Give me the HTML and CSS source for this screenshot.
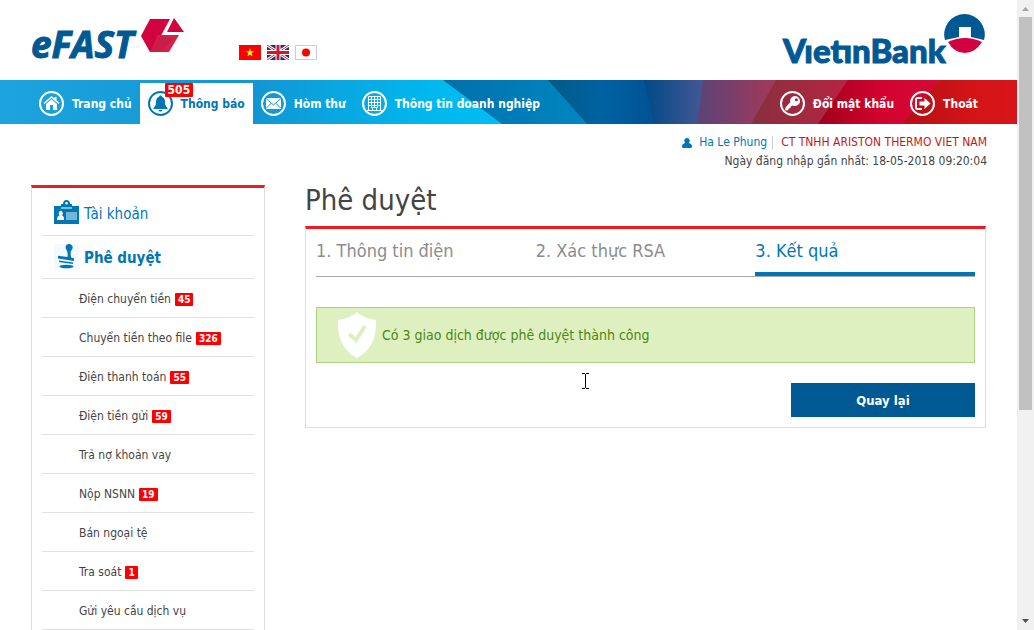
FILE: index.html
```html
<!DOCTYPE html>
<html lang="vi">
<head>
  <meta charset="UTF-8">
  <meta name="viewport" content="width=device-width, initial-scale=1.0">
  <title>VietinBank eFAST - Phê duyệt</title>
  <link rel="stylesheet" href="styles.css">
</head>
<body>
  <div class="page">
    <header class="header">
      <a href="#" class="logo-efast" aria-label="eFAST">
        <svg width="160" height="60" viewBox="-4 0 160 60">
          <text x="0" y="48" class="efast-text">eFAST</text>
          <path d="M119 9H139L126 33L119 42L110 26Z" fill="#d2013f"/>
          <path d="M127 25H148L138 42H119Z" fill="#d91f4b"/>
          <path d="M129 25L119 42H130L143 28Z" fill="#b91c49" opacity=".5"/>
          <path d="M143 8L153 22H136Z" fill="#d2013f"/>
        </svg>
      </a>
      <div class="languages">
        <a href="#" aria-label="Tiếng Việt">
          <svg width="22" height="15" viewBox="0 0 22 15"><path fill="#f00" d="M0 0h22v15H0z"/><path fill="#ff0" d="M11 3l1 3.200h3.200l-2.600 1.900 1 3.200L11 9.400l-2.600 1.900 1-3.200-2.600-1.900H10z"/></svg>
        </a>
        <a href="#" aria-label="English">
          <svg width="22" height="15" viewBox="0 0 22 15"><path fill="#20306f" d="M0 0h22v15H0z"/><path stroke="#fff" stroke-width="3" d="M0 0l22 15M22 0L0 15"/><path stroke="#d8203a" d="M0 0l22 15M22 0L0 15"/><path stroke="#fff" stroke-width="5" d="M11 0v15M0 7.500h22"/><path stroke="#d8152f" stroke-width="3" d="M11 0v15M0 7.500h22"/></svg>
        </a>
        <a href="#" aria-label="日本語">
          <svg width="22" height="15" viewBox="0 0 22 15"><path fill="#fff" stroke="#ccc" d="M.5.5h21v14H.5z"/><circle cx="11" cy="7.500" r="4" fill="#f00"/></svg>
        </a>
      </div>
      <a href="#" class="logo-bank" aria-label="VietinBank">
        <svg width="206" height="60" viewBox="0 0 206 60">
          <text x="3" y="53" class="bank-text">VıetınBank</text>
          <path d="M165 30A20.300 20.300 0 1 1 204 30L191 27V17H179V27Z" fill="#005993"/>
          <path d="M168 32Q185 24 202 32Q195 43 185 43Q174 43 168 32Z" fill="#d2013f"/>
        </svg>
      </a>
    </header>

    <nav class="navbar">
      <svg class="navbar-bg" viewBox="0 0 1017 44" preserveAspectRatio="none">
        <defs>
          <linearGradient id="g1"><stop offset="0" stop-color="#1da3de"/><stop offset=".5" stop-color="#1296d3"/><stop offset=".85" stop-color="#00b8ee"/><stop offset="1" stop-color="#00bdf2"/></linearGradient>
          <linearGradient id="g2"><stop offset="0" stop-color="#0070ac"/><stop offset="1" stop-color="#0087c2"/></linearGradient>
          <linearGradient id="g3"><stop offset="0" stop-color="#005b88"/><stop offset=".5" stop-color="#0062a2"/><stop offset="1" stop-color="#005293"/></linearGradient>
          <linearGradient id="g4"><stop offset="0" stop-color="#004a88"/><stop offset="1" stop-color="#465894"/></linearGradient>
          <linearGradient id="g5"><stop offset="0" stop-color="#5a4479"/><stop offset="1" stop-color="#a73758"/></linearGradient>
          <linearGradient id="g6"><stop offset="0" stop-color="#862f3d"/><stop offset="1" stop-color="#b92443"/></linearGradient>
          <linearGradient id="g7"><stop offset="0" stop-color="#9f001d"/><stop offset=".5" stop-color="#d2042f"/><stop offset="1" stop-color="#d60935"/></linearGradient>
          <linearGradient id="g8"><stop offset="0" stop-color="#b41013"/><stop offset=".6" stop-color="#d31417"/><stop offset="1" stop-color="#d81418"/></linearGradient>
        </defs>
        <path fill="url(#g1)" d="M0 0H504V44H0z"/>
        <path fill="url(#g2)" d="M443 0H590V44H502z"/>
        <path fill="url(#g3)" d="M548 0H656V44H587z"/>
        <path fill="url(#g4)" d="M644 0H705V44H654z"/>
        <path fill="url(#g5)" d="M703 0H778V44H697z"/>
        <path fill="url(#g6)" d="M776 0H850V44H751z"/>
        <path fill="url(#g7)" d="M848 0H942V44H818z"/>
        <path fill="url(#g8)" d="M940 0H1017V44H902z"/>
      </svg>
      <a href="#" class="nav-item">
        <svg class="nav-icon" viewBox="0 0 25 25"><circle cx="12.500" cy="12.500" r="11.500"/><path class="solid" d="M12.500 5L4.500 12l1 1 7-6 7 6 1-1-3-2.700V6h-2v1.600z"/><path class="solid" d="M7 13l5.500-4.700L18 13v6h-4v-5h-3v5H7z"/></svg>
        Trang chủ
      </a>
      <a href="#" class="nav-item active">
        <svg class="nav-icon" viewBox="0 0 25 25"><circle cx="12.500" cy="12.500" r="11.500"/><path class="solid" d="M12.500 4.500c-1 0-1.400.6-1.400 1.300C8.700 6.500 8 8.500 8 11c0 3-.8 4.500-2.500 6v1h14v-1C17.800 15.500 17 14 17 11c0-2.500-.7-4.500-3.100-5.200 0-.7-.4-1.300-1.400-1.300zM10.500 19c.3 1 1 1.600 2 1.600s1.700-.6 2-1.600z"/></svg>
        Thông báo
        <span class="nav-count">505</span>
      </a>
      <a href="#" class="nav-item">
        <svg class="nav-icon" viewBox="0 0 25 25"><circle cx="12.500" cy="12.500" r="11.500"/><path class="solid" d="M5 7h15v11H5z"/><path class="cut" d="M5 7.500l7.500 6.500L20 7.500M5 17.500l5.200-5.300M20 17.500l-5.200-5.300"/></svg>
        Hòm thư
      </a>
      <a href="#" class="nav-item">
        <svg class="nav-icon" viewBox="0 0 25 25"><circle cx="12.500" cy="12.500" r="11.500"/><path class="thin" d="M6.500 5.500h12v14h-12zM9.500 6v11M12.500 6v10M15.500 6v11M7 8.500h11M7 11.500h11M7 14.500h11M10.500 19.500v-3h4v3M5 19.500h15"/></svg>
        Thông tin doanh nghiệp
      </a>
      <a href="#" class="nav-item nav-right">
        <svg class="nav-icon" viewBox="0 0 25 25"><circle cx="12.500" cy="12.500" r="11.500"/><path class="solid" fill-rule="evenodd" d="M15 5a5 5 0 0 0-4.800 6.300L5.500 16.500l-.3 3 3-.3.500-1.700 1.700-.4.500-1.900 1.800-.8A5 5 0 1 0 15 5zm1.400 2.200a1.500 1.500 0 1 1 0 3 1.500 1.500 0 0 1 0-3z"/></svg>
        Đổi mật khẩu
      </a>
      <a href="#" class="nav-item">
        <svg class="nav-icon" viewBox="0 0 25 25"><circle cx="12.500" cy="12.500" r="11.500"/><path class="line" d="M12 7H7.500Q6 7 6 8.500v8Q6 18 7.500 18H12"/><path class="solid" d="M9.500 10.500h5V7l6 5.500-6 5.500v-3.500h-5z"/></svg>
        Thoát
      </a>
    </nav>

    <div class="user-info">
      <div>
        <a href="#" class="user-name"><svg width="10" height="10" viewBox="0 0 10 10"><path fill="#0077b5" d="M5 0a2.700 2.800 0 0 1 1.700 5C9 5.500 10 6.500 10 8.500q0 1.500-1.500 1.500h-7Q0 10 0 8.500C0 6.500 1 5.500 3.300 5A2.700 2.800 0 0 1 5 0z"/></svg>Ha Le Phung</a>
        <span class="company">CT TNHH ARISTON THERMO VIET NAM</span>
      </div>
      <div>Ngày đăng nhập gần nhất: 18-05-2018 09:20:04</div>
    </div>

    <div class="content">
      <aside class="sidebar">
        <a href="#" class="menu-group">
          <svg width="25" height="24" viewBox="0 0 25 24"><path fill="#0077b5" fill-rule="evenodd" d="M0 6h7V4h2c0-2 1-4 3.500-4S16 2 16 4h2v2h7v18H0zM12.500 2a1.300 1.300 0 1 0 0 2.600 1.300 1.300 0 0 0 0-2.600z"/><path fill="#fff" d="M7 7.500h11v1H7zM3 20c0-3 1-4 2.500-4.500a2 2.500 0 1 1 2.500 0C9.500 16 10 17 10 20z"/><path fill="#75b6d8" d="M12 12h11v8H12z"/></svg>
          Tài khoản
        </a>
        <a href="#" class="menu-group open">
          <svg width="25" height="25" viewBox="0 0 25 25"><path fill="#f3f9fc" d="M0 0h25v25H0z"/><path fill="#0077b5" d="M15 0a3.500 3.500 0 0 1 3 5.500c-1.500 2-1.700 4.500-1 8l3 .7v2.800L4 14.500v-2.800l9.500 1.300c.5-3 0-5-1-7C10.500 3 12 0 15 0zM5 16.500l14 2v1.500L5 18z"/><ellipse cx="12.500" cy="22.500" rx="7" ry="1.800" fill="#0077b5"/></svg>
          Phê duyệt
        </a>
        <ul class="submenu">
          <li><a href="#">Điện chuyển tiền</a> <span class="count">45</span></li>
          <li><a href="#">Chuyển tiền theo file</a> <span class="count">326</span></li>
          <li><a href="#">Điện thanh toán</a> <span class="count">55</span></li>
          <li><a href="#">Điện tiền gửi</a> <span class="count">59</span></li>
          <li><a href="#">Trả nợ khoản vay</a></li>
          <li><a href="#">Nộp NSNN</a> <span class="count">19</span></li>
          <li><a href="#">Bán ngoại tệ</a></li>
          <li><a href="#">Tra soát</a> <span class="count">1</span></li>
          <li><a href="#">Gửi yêu cầu dịch vụ</a></li>
        </ul>
      </aside>

      <main class="main">
        <h1>Phê duyệt</h1>
        <div class="panel">
          <ol class="steps">
            <li>1. Thông tin điện</li>
            <li>2. Xác thực RSA</li>
            <li class="current">3. Kết quả</li>
          </ol>
          <div class="alert">
            <svg width="40" height="46" viewBox="0 0 40 46"><path fill="#fff" d="M20 0c4 4 11 7 19 8 1 17-5 31-19 38C6 39 0 25 1 8 9 7 16 4 20 0z"/><path fill="none" stroke="#dff0c0" stroke-width="4" d="M12 22l7 6 9-14"/></svg>
            Có 3 giao dịch được phê duyệt thành công
          </div>
          <button type="button" class="back">Quay lại</button>
        </div>
      </main>
    </div>
  </div>

  <div class="scrollbar">
    <svg width="17" height="17" viewBox="0 0 17 17"><path fill="#a3a3a3" d="M5 11h7L8.500 7z"/></svg>
    <div class="scroll-track"><div class="scroll-thumb"></div></div>
    <svg width="17" height="17" viewBox="0 0 17 17"><path fill="#505050" d="M5 6h7l-3.500 4z"/></svg>
  </div>

  <svg class="cursor" width="9" height="17" viewBox="0 0 9 17"><path fill="none" stroke="#000" d="M1 .5h3M5 .5h3M1 15.500h3M5 15.500h3M4.500 1v14"/></svg>
</body>
</html>
```
FILE: styles.css
```css
* {
  box-sizing: border-box;
}
body {
  margin: 0;
  display: flex;
  height: 100vh;
  overflow: hidden;
  position: relative;
  background-color: #fff;
  color: #444;
  font-family: "DejaVu Sans Condensed", "Noto Sans", sans-serif;
  font-size: 12px;
}
a {
  color: inherit;
  text-decoration: none;
}
svg {
  display: block;
  flex: none;
}
.page {
  flex: 1;
  min-width: 0;
  overflow: hidden;
}

/* Header */
.header {
  display: flex;
  align-items: flex-start;
  height: 80px;
  padding: 10px 31px 0 27px;
}
.efast-text {
  font: italic bold 37px "Open Sans", sans-serif;
  fill: #005993;
  stroke: #005993;
}
.bank-text {
  font: 900 33px Lato, sans-serif;
  fill: #005993;
  stroke: #005993;
}
.languages {
  display: flex;
  gap: 6px;
  margin: 35px auto 0 52px;
}

/* Navigation */
.navbar {
  position: relative;
  display: flex;
  height: 44px;
  padding: 3px 31px 0;
}
.navbar-bg {
  position: absolute;
  inset: 0;
  width: 100%;
  height: 100%;
}
.nav-item {
  position: relative;
  display: flex;
  align-items: center;
  gap: 8px;
  padding: 0 8px;
  color: #fff;
  font-weight: bold;
  white-space: nowrap;
}
.nav-item.active {
  background-color: #fff;
  color: #0077b5;
}
.nav-right {
  margin-left: auto;
}
.nav-icon {
  width: 25px;
  height: 25px;
  fill: none;
  stroke: currentColor;
  stroke-width: 2;
}
.nav-icon .solid {
  fill: currentColor;
  stroke: none;
}
.nav-icon .thin {
  stroke-width: 1;
}
.nav-icon .cut {
  stroke: #1499d5;
  stroke-width: 1;
}
.nav-count {
  position: absolute;
  top: 0;
  left: 25px;
  padding: 0 3px;
  border-radius: 1px;
  background-color: #f00;
  color: #fff;
  font-size: 12px;
  line-height: 14px;
}

/* User info */
.user-info {
  padding: 9px 30px 0;
  line-height: 19px;
  text-align: right;
}
.user-info div {
  display: flex;
  justify-content: flex-end;
}
.user-name {
  display: flex;
  align-items: center;
  gap: 7px;
  color: #0077b5;
}
.company {
  margin-left: 5px;
  padding-left: 9px;
  color: #c4161c;
  background: linear-gradient(#ccc, #ccc) no-repeat left center / 1px 13px;
}

/* Content */
.content {
  display: flex;
  align-items: flex-start;
  gap: 40px;
  padding: 14px 31px 0;
}
.sidebar {
  flex: none;
  width: 234px;
  padding: 0 10px;
  border: 1px solid #ddd;
  border-top: 3px solid #ed1c24;
}
.menu-group {
  display: flex;
  align-items: center;
  gap: 5px;
  height: 48px;
  padding: 4px 0 0 12px;
  border-bottom: 1px solid #e1e1e1;
  color: #0077b5;
  font-size: 15px;
}
.menu-group svg {
  margin-bottom: 4px;
}
.menu-group.open {
  height: 43px;
  padding-top: 2px;
  font-weight: bold;
}
.submenu {
  margin: 0;
  padding: 0;
  list-style: none;
}
.submenu li {
  display: flex;
  align-items: center;
  gap: 4px;
  height: 39px;
  padding: 2px 0 0 37px;
  border-bottom: 1px solid #e1e1e1;
}
.count {
  padding: 0 3px;
  border-radius: 1px;
  background-color: #f00;
  color: #fff;
  font-size: 10px;
  font-weight: bold;
  line-height: 13px;
}
.main {
  flex: 1;
  min-width: 0;
}
h1 {
  margin: -3px 0 8px;
  font-size: 29px;
  font-weight: normal;
  line-height: 36px;
}
.panel {
  display: flex;
  flex-direction: column;
  padding: 0 10px 10px;
  border: 1px solid #ddd;
  border-top: 3px solid #ed1c24;
}
.steps {
  display: flex;
  margin: 0 0 30px;
  padding: 0;
  border-bottom: 1px solid #aaa;
  list-style: none;
  color: #8c8c8c;
  font-size: 18px;
  line-height: 43px;
}
.steps li {
  flex: 1;
  border-bottom: 4px solid transparent;
}
.steps .current {
  border-color: #0077b5;
  color: #0077b5;
}
.alert {
  display: flex;
  align-items: center;
  gap: 5px;
  height: 56px;
  padding-left: 20px;
  border: 1px solid #acd282;
  background-color: #dff0c0;
  color: #4b8714;
  font-size: 14px;
}
.back {
  align-self: flex-end;
  width: 184px;
  height: 34px;
  margin-top: 20px;
  border: none;
  background-color: #005993;
  color: #fff;
  font-family: inherit;
  font-size: 13px;
  font-weight: bold;
  cursor: pointer;
}

/* Scrollbar */
.scrollbar {
  display: flex;
  flex-direction: column;
  width: 17px;
  background-color: #f1f1f1;
}
.scroll-track {
  flex: 1;
  padding: 0 2px;
}
.scroll-thumb {
  height: 66%;
  background-color: #c1c1c1;
}

.cursor {
  position: absolute;
  top: 373px;
  left: 581px;
}
```
